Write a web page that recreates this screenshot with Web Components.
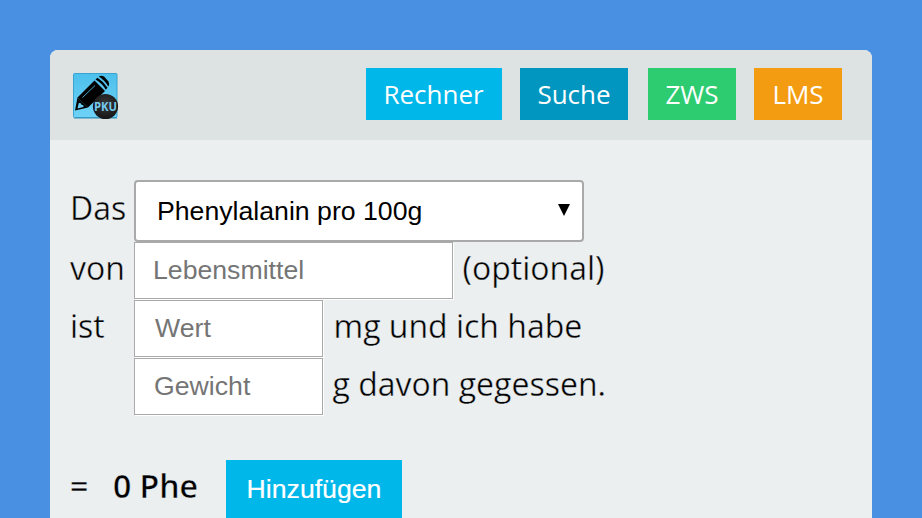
<!DOCTYPE html>
<html lang="de">
<head>
<meta charset="utf-8">
<title>PKU Rechner</title>
<style>
html, body { margin: 0; height: 100%; overflow: hidden; background: #4a90e2; }
</style>
</head>
<body>
<pku-app></pku-app>
<script>
class PkuElement extends HTMLElement {
  connectedCallback() {
    if (!this.shadowRoot) this.attachShadow({ mode: 'open' }).innerHTML = this.view();
  }
}

customElements.define('pku-logo', class extends PkuElement {
  view() {
    return `<style>:host{display:block;width:48px;height:48px}svg{display:block}</style>
    <svg width="48" height="48" viewBox="0 0 48 48">
      <defs>
        <linearGradient id="sky" x1="0" y1="0" x2="0" y2="1"><stop offset="0" stop-color="#4cc0ec"/><stop offset="1" stop-color="#6fd2f7"/></linearGradient>
        <radialGradient id="ball" cx=".5" cy=".4" r=".6"><stop offset="0" stop-color="#3a3a3a"/><stop offset="1" stop-color="#151515"/></radialGradient>
      </defs>
      <rect x="1.5" y="1.5" width="43.5" height="44" rx="1" fill="url(#sky)" stroke="#3aa3cf"/>
      <path d="M2 46h43" stroke="#2f8fb9"/>
      <path d="M3 38.5L5.500 25.500L16 35.500Z" fill="#000"/>
      <path d="M6.800 31Q9.500 30.500 9.500 32.700Q12 32.700 11.500 35L5.500 36.500Z" fill="#66ccf3"/>
      <path d="M5.500 25.500L22.500 8.500L33 19L16 35.500Z" fill="#000"/>
      <path d="M10.500 25.500L23 13.500" stroke="#4db9e3" stroke-width=".9"/>
      <path d="M23.500 7.500L25.500 5.800Q31.500 9.500 35.500 15.800L33.800 17.800Q30 11 23.500 7.500Z" fill="#000"/>
      <path d="M26.800 4.600Q29.500 2.800 32 4.600L36.500 9.500Q38 12.500 36.400 14.800Q32.500 8 26.800 4.600Z" fill="#000"/>
      <circle cx="33.500" cy="34.500" r="12.600" fill="url(#ball)"/>
      <text x="22" y="38.800" textLength="23" lengthAdjust="spacingAndGlyphs" font-family="Open Sans,sans-serif" font-size="12" font-weight="700" fill="#75c9ee">PKU</text>
    </svg>`;
  }
});

customElements.define('nav-button', class extends PkuElement {
  view() {
    return `<style>
      :host{display:flex;box-sizing:border-box;height:52px;align-items:center;justify-content:center;color:#fff;font:400 26px/54px "Open Sans",sans-serif;white-space:nowrap}
    </style><slot></slot>`;
  }
});

customElements.define('app-header', class extends PkuElement {
  view() {
    return `<style>
      :host{display:flex;box-sizing:border-box;height:90px;padding:18px 30px 0 22px;background:#dde3e2;align-items:flex-start;justify-content:space-between}
      pku-logo{margin-top:4px}
      nav{display:flex}
      .a{width:136px;background:#00b7ea;margin-right:18px;padding-right:1px}
      .b{width:108px;background:#0096c0;margin-right:20px}
      .c{width:88px;background:#2ecc71;margin-right:18px}
      .d{width:88px;background:#f39c12}
    </style>
    <pku-logo></pku-logo>
    <nav><nav-button class="a">Rechner</nav-button><nav-button class="b">Suche</nav-button><nav-button class="c">ZWS</nav-button><nav-button class="d">LMS</nav-button></nav>`;
  }
});

customElements.define('select-box', class extends PkuElement {
  view() {
    return `<style>
      :host{display:flex;box-sizing:border-box;width:450px;height:62px;border:2px solid #a9a9a9;border-radius:4px;background:#fff;padding:0 12px 0 21px;align-items:center;justify-content:space-between;font:26.670px "Liberation Sans",Arial,sans-serif;color:#000}
      svg{margin-bottom:2px}
    </style><span><slot></slot></span><svg width="12" height="12"><path d="M0 0h12L6 12z"/></svg>`;
  }
});

customElements.define('text-box', class extends PkuElement {
  view() {
    return `<style>
      :host{display:block;box-sizing:border-box;height:57px;border:1px solid #a9a9a9;background:#fff;box-shadow:1px 1px 0 #fff;padding-left:19px;font:26.670px/55px "Liberation Sans",Arial,sans-serif;color:#757575}
    </style><slot></slot>`;
  }
});

customElements.define('form-row', class extends PkuElement {
  view() {
    return `<style>
      :host{display:flex;height:58px;font:400 32px/52px "Open Sans",sans-serif;color:#000;white-space:nowrap}
      /* a thin stroke in the panel colour makes the letters lighter */
      .label,.after{-webkit-text-stroke:.35px #ebeff0}
      .label{width:64px;flex:none}
      .after{margin-left:var(--gap,9.500px)}
    </style><span class="label">${this.getAttribute('label') || ''}</span><slot></slot><span class="after">${this.getAttribute('after') || ''}</span>`;
  }
});

customElements.define('result-row', class extends PkuElement {
  view() {
    return `<style>
      :host{display:flex;height:58px;font:600 32px/52px "Open Sans",sans-serif;color:#000;white-space:nowrap}
      .eq,.sum{-webkit-text-stroke:.35px #ebeff0}
      .eq{width:43px}.sum{width:113px}
      .add{width:176px;height:58px;background:#00b7ea;color:#fff;text-align:center;font:26.670px/58px "Liberation Sans",Arial,sans-serif;-webkit-text-stroke:.2px #fff}
    </style><span class="eq">=</span><span class="sum">0 Phe</span><div class="add">Hinzufügen</div>`;
  }
});

customElements.define('pku-app', class extends PkuElement {
  view() {
    return `<style>
      :host{display:block;box-sizing:border-box;height:518px;padding:50px 50px 0;background:#4a90e2}
      main{height:468px;background:#ebeff0;border-radius:8px 8px 0 0;overflow:hidden}
      section{padding:40px 20px 0}
      .first{height:62px;line-height:56px}
      .food{width:319px;padding-left:18px}.small{width:189px}
      .value{--gap:10.500px}
      .value .small{padding-left:20px}
      result-row{margin-top:44px}
    </style>
    <main><app-header></app-header><section>
      <form-row class="first" label="Das"><select-box>Phenylalanin pro 100g</select-box></form-row>
      <form-row label="von" after="(optional)"><text-box class="food">Lebensmittel</text-box></form-row>
      <form-row class="value" label="ist" after="mg und ich habe"><text-box class="small">Wert</text-box></form-row>
      <form-row after="g davon gegessen."><text-box class="small">Gewicht</text-box></form-row>
      <result-row></result-row>
    </section></main>`;
  }
});
</script>
</body>
</html>
